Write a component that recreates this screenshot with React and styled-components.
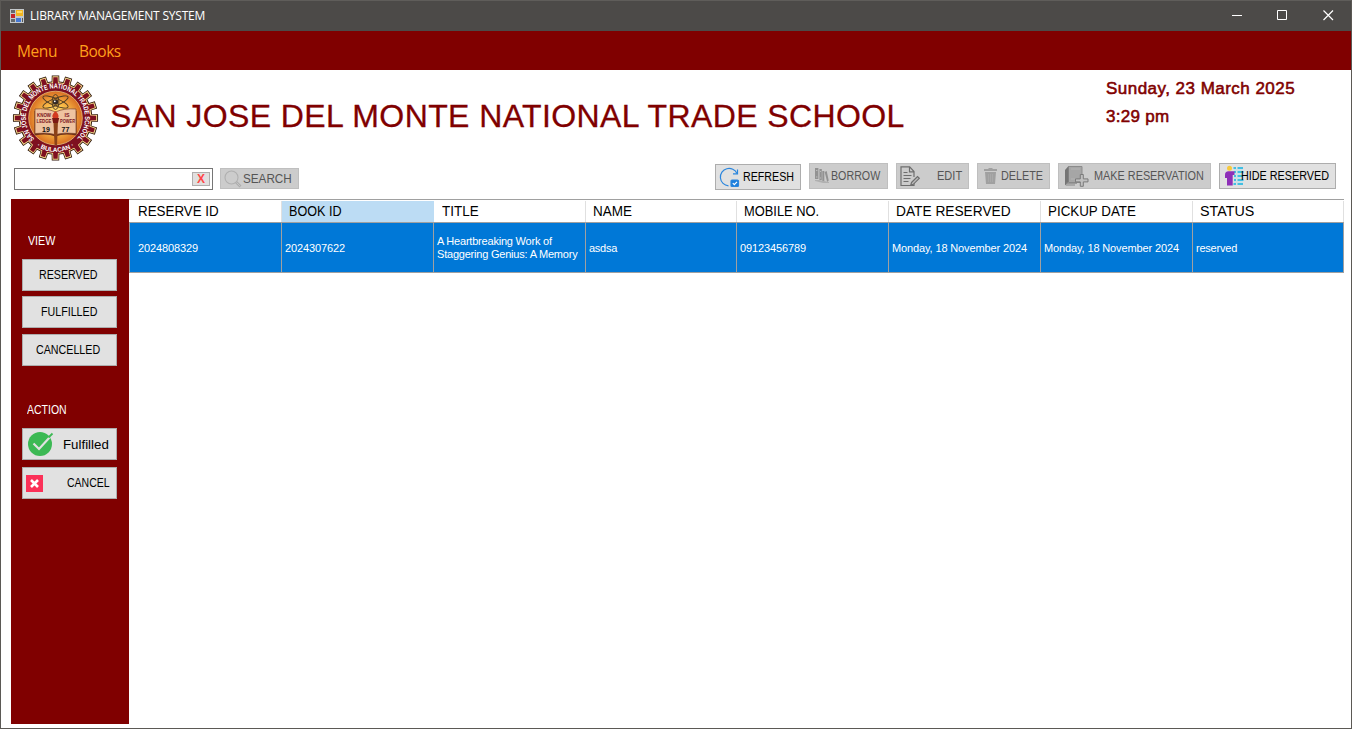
import React from "react";
import styled, { createGlobalStyle } from "styled-components";

const MAROON = "#800000";

const GlobalStyle = createGlobalStyle`
  * { box-sizing: border-box; }
  body { margin: 0; background: #fff; overflow: hidden; }
`;

const Window = styled.div`
  width: 1352px;
  height: 729px;
  display: flex;
  flex-direction: column;
  border: 1px solid #5b5955;
  border-top-color: #5f5d5a;
  background: #fff;
  color: #000;
  font-family: "Liberation Sans", Arial, sans-serif;
  overflow: hidden;
`;

const TitleBar = styled.header`
  display: flex;
  align-items: center;
  height: 30px;
  flex: none;
  padding-left: 9px;
  background: #4c4a48;
  color: #fff;
  font: 12px/28px "Open Sans", "Noto Sans", sans-serif;
`;

const WindowTitle = styled.span`
  flex: 1;
  padding-left: 6px;
  letter-spacing: -0.2px;
  white-space: nowrap;
`;

const WindowControls = styled.div`
  display: flex;
  height: 28px;
  svg { width: 46px; height: 28px; }
  svg:first-child { width: 45px; }
`;

const MenuBar = styled.nav`
  display: flex;
  flex: none;
  height: 39px;
  padding-left: 16px;
  gap: 22px;
  background: ${MAROON};
  color: #ff9f1c;
  font: 15.5px/41px "Open Sans", "Noto Sans", sans-serif;
`;

const MenuItem = styled.span`
  width: ${(p) => p.$width}px;
  letter-spacing: ${(p) => p.$spacing}px;
`;

const Banner = styled.section`
  display: flex;
  flex: none;
  height: 93px;
  padding: 5px 0 0 11px;
`;

const SchoolName = styled.h1`
  width: 996px;
  margin: 21px 0 0 10px;
  color: ${MAROON};
  font-size: 32px;
  font-weight: 400;
  line-height: 40px;
  letter-spacing: 0.4px;
  -webkit-text-stroke: 0.3px ${MAROON};
  white-space: nowrap;
`;

const Clock = styled.div`
  color: ${MAROON};
  font-size: 17px;
  line-height: 28px;
  letter-spacing: 0.47px;
  -webkit-text-stroke: 0.55px ${MAROON};
  white-space: nowrap;
`;

const Time = styled.div`
  letter-spacing: 0.3px;
`;

const Toolbar = styled.section`
  display: flex;
  flex: none;
  height: 36px;
  padding-left: 13px;
  align-items: flex-start;
`;

const SearchField = styled.div`
  display: flex;
  justify-content: flex-end;
  align-items: center;
  width: 199px;
  height: 22px;
  margin: 5px 7px 0 0;
  padding-right: 2px;
  border: 1px solid #767676;
`;

const ClearButton = styled.button`
  width: 18px;
  height: 14px;
  padding: 0;
  border: 1px solid #b0adad;
  background: #e1dfdf;
  color: #ff4646;
  font: bold 12px/12px "Liberation Sans", sans-serif;
`;

const Label = styled.span`
  display: inline-block;
  transform: scaleX(${(p) => p.$stretch || 0.89});
  transform-origin: left center;
  white-space: nowrap;
  padding-top: ${(p) => p.$drop || 0}px;
`;

const Button = styled.button`
  display: flex;
  flex: none;
  align-items: center;
  width: ${(p) => p.$width}px;
  height: ${(p) => p.$height || 26}px;
  margin: ${(p) => p.$top || 0}px 0 0;
  padding: 0;
  border: 1px solid ${(p) => (p.$dim ? "#bfbfbf" : "#adadad")};
  background: ${(p) => (p.$dim ? "#cccccc" : "#e1e1e1")};
  color: ${(p) => (p.$dim ? "#555" : "#000")};
  font: ${(p) => p.$size || 12}px/16px "Liberation Sans", Arial, sans-serif;
`;

const IconSlot = styled.span`
  display: flex;
  flex: none;
  align-items: center;
  width: ${(p) => p.$width}px;
  padding-left: ${(p) => p.$inset || 0}px;
  svg { flex: none; overflow: visible; }
`;

const ActionGroup = styled.div`
  display: flex;
  align-items: flex-start;
  gap: 8px;
  margin-left: auto;
  padding-right: 15px;
`;

const Body = styled.main`
  display: flex;
  flex: none;
  height: 525px;
  padding: 0 7px 0 10px;
`;

const Sidebar = styled.aside`
  width: 118px;
  flex: none;
  padding: 34px 12px 0 11px;
  background: ${MAROON};
`;

const SidebarHeading = styled.div`
  height: 26px;
  padding-left: ${(p) => p.$inset}px;
  margin-top: ${(p) => p.$top || 0}px;
  color: #fff;
  font-size: 12px;
  line-height: 16px;
`;

const Stack = styled.div`
  display: flex;
  flex-direction: column;
`;

const Grid = styled.div`
  flex: 1;
  display: flex;
  flex-direction: column;
  border-top: 1px solid #a0a0a0;
`;

const HeadRow = styled.div`
  display: grid;
  grid-template-columns: 153px 152px 152px 151px 152px 152px 152px 151px;
  height: 22px;
  padding-top: 1px;
`;

const HeadCell = styled.div`
  padding-left: ${(p) => p.$inset}px;
  border-right: 1px solid ${(p) => (p.$active ? "#bcdcf4" : "#e0e0e0")};
  background: ${(p) => (p.$active ? "#bcdcf4" : "#fff")};
  font-size: 14px;
  line-height: 21px;
`;

const DataRow = styled.div`
  display: grid;
  grid-template-columns: 152px 152px 152px 151px 152px 152px 152px 151px;
  height: 51px;
  border: solid #a0a0a0;
  border-width: 1px 0 1px 1px;
  background: #0078d7;
  color: #fff;
`;

const DataCell = styled.div`
  display: flex;
  align-items: center;
  padding-top: ${(p) => (p.$wrapped ? 0 : 2)}px;
  padding-left: ${(p) => (p.$first ? 8 : 3)}px;
  border-right: 1px solid #a0a0a0;
  font-size: 11px;
  line-height: 13px;
  letter-spacing: ${(p) => p.$spacing}px;
  white-space: pre-line;
`;

const headers = [
  ["RESERVE ID", 0.955, 9],
  ["BOOK ID", 0.9, 7],
  ["TITLE", 0.96, 8],
  ["NAME", 0.965, 7],
  ["MOBILE NO.", 0.92, 7],
  ["DATE RESERVED", 0.98, 7],
  ["PICKUP DATE", 0.955, 7],
  ["STATUS", 1.02, 7],
];

const record = [
  ["2024808329", -0.13],
  ["2024307622", -0.13],
  ["A Heartbreaking Work of\nStaggering Genius: A Memory", -0.21],
  ["asdsa", -0.25],
  ["09123456789", -0.13],
  ["Monday, 18 November 2024", -0.13],
  ["Monday, 18 November 2024", -0.13],
  ["reserved", -0.22],
];

function gearPath(cx, cy, outer, inner, half, teeth = 20) {
  const pts = [];
  const step = 360 / teeth;
  for (let i = 0; i < teeth; i++) {
    const a = i * step;
    [
      [inner, -half - 1],
      [outer, -half],
      [outer, half],
      [inner, half + 1],
    ].forEach(([r, d]) => {
      const t = ((a + d - 90) * Math.PI) / 180;
      pts.push(`${(cx + r * Math.cos(t)).toFixed(2)},${(cy + r * Math.sin(t)).toFixed(2)}`);
    });
  }
  return `M${pts.join("L")}Z`;
}

function SchoolSeal() {
  return (
    <svg width="88" height="88" viewBox="0 0 88 88" fontFamily="Liberation Sans, Arial, sans-serif">
      <defs>
        <radialGradient id="glow">
          <stop offset="0" stopColor="#fff3a0" />
          <stop offset="0.5" stopColor="#fbc04a" />
          <stop offset="1" stopColor="#d96f22" />
        </radialGradient>
        <path id="upperArc" d="M22.6 63.9A29.6 29.6 0 1 1 64.4 63.9" />
        <path id="lowerArc" d="M19.5 67A34 34 0 0 0 67.5 67" />
      </defs>
      <path d={gearPath(43.5, 43, 42.7, 36.8, 5)} fill="#2c1308" />
      <path d={gearPath(43.5, 43, 41.8, 35.9, 4.1)} fill="#f5d98c" />
      <path d={gearPath(43.5, 43, 40.7, 34.8, 3)} fill="#7e1020" />
      <circle cx="43.5" cy="43" r="34.9" fill="#7e1020" />
      <circle cx="43.5" cy="43" r="26.8" fill="url(#glow)" stroke="#e7c27a" strokeWidth="0.8" />
      <g fill="#fff" fontSize="7" fontWeight="700">
        <text textLength="138" lengthAdjust="spacingAndGlyphs">
          <textPath href="#upperArc" textLength="138" lengthAdjust="spacingAndGlyphs">SAN JOSE DEL MONTE NATIONAL TRADE SCHOOL</textPath>
        </text>
        <text fontSize="6.4">
          <textPath href="#lowerArc" startOffset="50%" textAnchor="middle">· BULACAN ·</textPath>
        </text>
      </g>
      <path d="M22.5 36Q34 34 43.5 38.500Q53 34 64.500 36V60.500Q52 58 43.500 61.500Q35 58 22.500 60.500Z" fill="#6f3018" />
      <path d="M23 34Q35 33 43.500 37Q52 33 64 34V58.500Q52 57 43.500 59.500Q35 57 23 58.500Z" fill="#efc3a0" stroke="#7c4328" strokeWidth="0.7" />
      <g fill="none" stroke="#4b3a24" strokeWidth="0.9">
        <ellipse cx="43.5" cy="27" rx="13.5" ry="3.6" transform="rotate(22 43.5 27)" />
        <ellipse cx="43.5" cy="27" rx="13.5" ry="3.6" transform="rotate(-22 43.5 27)" />
        <ellipse cx="43.5" cy="27" rx="3.4" ry="7.5" />
      </g>
      <circle cx="43.5" cy="27" r="2.8" fill="#332a22" />
      <circle cx="42.8" cy="26.3" r="0.9" fill="#fff" />
      <path d="M41.4 46h4.600l-1 24h-2.400z" fill="#8c4218" />
      <path d="M40 43h7.200l-1.200 5h-4.800z" fill="#7c1a14" />
      <path d="M43.500 36c3 3 3.600 5 2.600 7h-5c-1.600-2-.5-4 2.400-7z" fill="#d33a20" />
      <g fill="#7a141c" fontSize="5.2" fontWeight="700">
        <text x="25" y="41.6" textLength="14" lengthAdjust="spacingAndGlyphs">KNOW</text>
        <text x="24.5" y="48.2" textLength="15" lengthAdjust="spacingAndGlyphs">LEDGE</text>
        <text x="52.500" y="41.6" textLength="5" lengthAdjust="spacingAndGlyphs">IS</text>
        <text x="48" y="48.2" textLength="15" lengthAdjust="spacingAndGlyphs">POWER</text>
      </g>
      <g fill="#111" fontSize="7" fontWeight="700">
        <text x="30" y="56.5">19</text>
        <text x="49.500" y="56.5">77</text>
      </g>
    </svg>
  );
}

const AppIcon = () => (
  <svg width="14" height="14" viewBox="0 0 14 14">
    <path d="M0 0h14v14H0z" fill="#c3c8cb" />
    <path d="M1 1h4v3H1zM1 10h4v3H1z" fill="#65696d" />
    <path d="M1 5h4v4H1z" fill="#c5242b" />
    <path d="M6 1h7v6H6z" fill="#f2b622" />
    <path d="M7 2h5v2H7z" fill="#ffdc66" />
    <path d="M6 9h5v4H6z" fill="#4679d4" />
    <path d="M12 9h1v4h-1z" fill="#55595d" />
  </svg>
);

const SearchIcon = () => (
  <svg width="20" height="18" viewBox="0 0 20 18" fill="none">
    <circle cx="8.5" cy="7.5" r="6.5" stroke="#b0b0b0" strokeWidth="1.1" />
    <path d="M13 12l4.500 4.500" stroke="#adadad" strokeWidth="2.6" />
    <path d="M13.500 12.500l3.500 3.500" stroke="#ccc" strokeWidth="0.8" />
  </svg>
);

const RefreshIcon = () => (
  <svg width="22" height="22" viewBox="0 0 22 22" fill="none" stroke="#2b86dd" strokeWidth="1.2">
    <path d="M18 7.500A8.700 8.700 0 1 0 9.500 19.800" />
    <path d="M14 7.800h4.500V3.500" />
    <rect x="12" y="14" width="7.5" height="6.5" rx="1" fill="#1c7fdd" />
    <path d="M13.800 17.200l1.500 1.500 2.700-2.900" stroke="#fff" />
  </svg>
);

const BorrowIcon = () => (
  <svg width="15" height="16" viewBox="0 0 15 16" fill="#929292">
    <path d="M0 0h3.400v11H0zM4.400 1h2.400v11H4.400zM7.300 3h2v10h-2z" />
    <path d="M9.700 4l2-1 2 9.500-1.500 1.500z" />
    <path d="M0 12h4l10 2v1H8L0 13z" fill="#b0b0b0" />
    <path d="M1 2.500h1.400M5 3.500h1M1 9h1.400M5 10h1" stroke="#bcbcbc" />
  </svg>
);

const EditIcon = () => (
  <svg width="20" height="21" viewBox="0 0 20 21" fill="none" stroke="#6e6e6e" strokeWidth="1.2">
    <path d="M14 16.500v3H1V.8h8.700L14 5.500V11M9.500.8v5H14" />
    <path d="M3.500 6.500h4M3.500 9.500h8M3.500 12.500h7M3.500 15.500h5" />
    <path d="M11.500 16.500l6-6 1.800 1.800-6 6-2.500.7z" fill="#bbb" />
  </svg>
);

const TrashIcon = () => (
  <svg width="13" height="16" viewBox="0 0 13 16" fill="#a0a0a0">
    <path d="M0 1h4l1-1h3l1 1h4v2H0zM1 4h11l-1 12H2z" />
    <path d="M4.500 6v8M6.500 6v8M8.500 6v8" stroke="#a9a9a9" />
  </svg>
);

const ReservationIcon = () => (
  <svg width="24" height="22" viewBox="0 0 24 22" fill="none">
    <path d="M3.500 1.500h13.500v16H3.500z" fill="#a6a6a6" stroke="#8c8c8c" />
    <path d="M0 5l3.500-4v16L0 20.500z" fill="#747474" />
    <path d="M1 18.200h11M1 20h9" stroke="#858585" />
    <path d="M6 4h9M6 14h6" stroke="#b4b4b4" />
    <path d="M15.300 9.500h3v4.400H23v3h-4.700v4.400h-3v-4.400h-4.800v-3h4.800z" fill="#c0c0c0" stroke="#7b7b7b" />
  </svg>
);

const HideIcon = () => (
  <svg width="20" height="20" viewBox="0 0 20 20">
    <path d="M8.500 2h2.500M12.500 2h5.500M9 6h2M12.500 6h6M9 10h2M12.500 10h5.500M9 14h2M12.500 14h6M8.500 18h2.500M12.500 18h5.500" stroke="#42bfe3" strokeWidth="1.8" />
    <path d="M9 4h9M9 8h9M9 12h9M9 16h9" stroke="#b3e1ee" strokeWidth="1" />
    <circle cx="4.5" cy="2.3" r="2.5" fill="#f7c93c" />
    <path d="M0 9q0-3.700 3.500-3.700H9.500V9H7.700v10.500H2V12H0z" fill="#8e2fb8" />
  </svg>
);

const CheckIcon = () => (
  <svg width="26" height="26" viewBox="0 0 26 26" fill="none">
    <circle cx="12" cy="13" r="12" fill="#3cb954" />
    <path d="M5.500 12.500l5.500 5.500L22 6" stroke="#e1e1e1" strokeWidth="2.2" />
    <path d="M20.500 6.500l4-4" stroke="#3cb954" strokeWidth="1.8" />
  </svg>
);

const CrossIcon = () => (
  <svg width="17" height="17" viewBox="0 0 17 17">
    <path d="M0 0h17v17H0z" fill="#fb3158" />
    <path d="M5 5l7 7M12 5l-7 7" stroke="#fff" strokeWidth="2.6" />
  </svg>
);

export default function App() {
  return (
    <>
      <GlobalStyle />
      <Window>
        <TitleBar>
          <AppIcon />
          <WindowTitle>LIBRARY MANAGEMENT SYSTEM</WindowTitle>
          <WindowControls>
            <svg viewBox="0 0 45 28"><path d="M18 13.500h10" stroke="#fff" /></svg>
            <svg viewBox="0 0 46 28"><path d="M18.500 8.500h9v9h-9z" fill="none" stroke="#fff" /></svg>
            <svg viewBox="0 0 46 28"><path d="M18.500 8.500l9.500 9.500M28 8.500l-9.500 9.500" stroke="#fff" strokeWidth="1.2" /></svg>
          </WindowControls>
        </TitleBar>
        <MenuBar>
          <MenuItem $width={40} $spacing={-0.4}>Menu</MenuItem>
          <MenuItem $width={42} $spacing={-0.5}>Books</MenuItem>
        </MenuBar>

        <Banner>
          <SchoolSeal />
          <SchoolName>SAN JOSE DEL MONTE NATIONAL TRADE SCHOOL</SchoolName>
          <Clock>
            <div>Sunday, 23 March 2025</div>
            <Time>3:29 pm</Time>
          </Clock>
        </Banner>

        <Toolbar>
          <SearchField>
            <ClearButton>X</ClearButton>
          </SearchField>
          <Button $dim $width={79} $height={21} $top={5} $size={13}>
            <IconSlot $width={22} $inset={2}><SearchIcon /></IconSlot>
            <Label $stretch={0.9} $drop={1}>SEARCH</Label>
          </Button>
          <ActionGroup>
            <Button $width={86} $top={1}>
              <IconSlot $width={27} $inset={3}><RefreshIcon /></IconSlot>
              <Label>REFRESH</Label>
            </Button>
            <Button $dim $width={79}>
              <IconSlot $width={21} $inset={5}><BorrowIcon /></IconSlot>
              <Label>BORROW</Label>
            </Button>
            <Button $dim $width={73}>
              <IconSlot $width={40} $inset={3}><EditIcon /></IconSlot>
              <Label $stretch={0.92}>EDIT</Label>
            </Button>
            <Button $dim $width={73}>
              <IconSlot $width={23} $inset={6}><TrashIcon /></IconSlot>
              <Label $stretch={0.9}>DELETE</Label>
            </Button>
            <Button $dim $width={153}>
              <IconSlot $width={35} $inset={6}><ReservationIcon /></IconSlot>
              <Label $stretch={0.905}>MAKE RESERVATION</Label>
            </Button>
            <Button $width={117}>
              <IconSlot $width={21} $inset={5}><HideIcon /></IconSlot>
              <Label $stretch={0.9}>HIDE RESERVED</Label>
            </Button>
          </ActionGroup>
        </Toolbar>

        <Body>
          <Sidebar>
            <SidebarHeading $inset={6}><Label>VIEW</Label></SidebarHeading>
            <Stack>
              <Button $width={95} $height={32}>
                <IconSlot $width={16} />
                <Label>RESERVED</Label>
              </Button>
              <Button $width={95} $height={32} $top={5}>
                <IconSlot $width={18} />
                <Label>FULFILLED</Label>
              </Button>
              <Button $width={95} $height={32} $top={6}>
                <IconSlot $width={13} />
                <Label>CANCELLED</Label>
              </Button>
            </Stack>
            <SidebarHeading $inset={5} $top={36}><Label $stretch={0.875}>ACTION</Label></SidebarHeading>
            <Stack>
              <Button $width={95} $height={32} $size={13.3}>
                <IconSlot $width={40} $inset={5}><CheckIcon /></IconSlot>
                <Label $stretch={1} $drop={2}>Fulfilled</Label>
              </Button>
              <Button $width={95} $height={32} $top={7}>
                <IconSlot $width={44} $inset={3}><CrossIcon /></IconSlot>
                <Label $stretch={0.875}>CANCEL</Label>
              </Button>
            </Stack>
          </Sidebar>

          <Grid>
            <HeadRow>
              {headers.map(([name, stretch, inset], i) => (
                <HeadCell key={name} $inset={inset} $active={i === 1}>
                  <Label $stretch={stretch}>{name}</Label>
                </HeadCell>
              ))}
            </HeadRow>
            <DataRow>
              {record.map(([value, spacing], i) => (
                <DataCell
                  key={headers[i][0]}
                  $first={i === 0}
                  $wrapped={value.includes("\n")}
                  $spacing={spacing}
                >
                  {value}
                </DataCell>
              ))}
            </DataRow>
          </Grid>
        </Body>
      </Window>
    </>
  );
}
